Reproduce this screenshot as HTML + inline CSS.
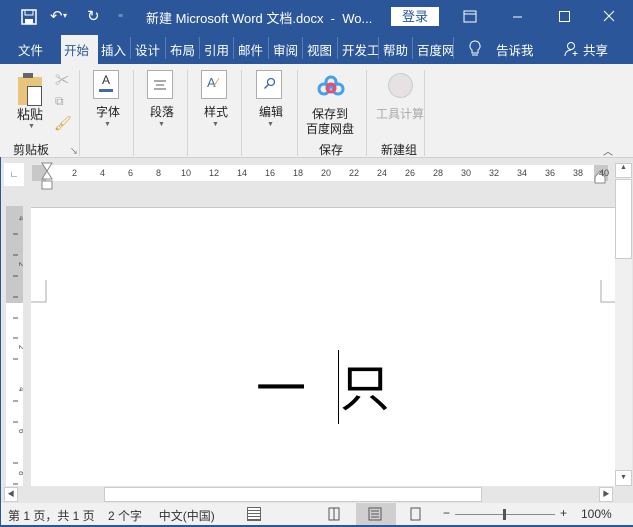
<!DOCTYPE html><html><head><meta charset="utf-8"><style>
*{margin:0;padding:0;box-sizing:border-box}
body{width:633px;height:527px;overflow:hidden;font-family:"Liberation Sans","Noto Sans CJK SC",sans-serif;background:#2b579a;position:relative;font-size:12px}
.a{position:absolute}
.t{color:#fff;font-size:13px}
.tab{position:absolute;top:40px;color:#fff;font-size:12.5px}
.sep{position:absolute;top:37px;width:1px;height:22px;background:#5a7cb3}
.rb{position:absolute;left:0;top:64px;width:633px;height:93px;background:#f1f1f1}
.box{position:absolute;top:70px;width:26px;height:29px;border:1px solid #adadad;background:#fff}
.lbl{position:absolute;font-size:12px;color:#222}
.vs{position:absolute;top:70px;width:1px;height:86px;background:#d5d5d5}
.dn{position:absolute;font-size:7px;color:#666}
.rn{position:absolute;top:168px;font-size:9px;color:#444}
</style></head><body>
<svg class="a" style="left:21px;top:9px" width="16" height="16"><rect x="1" y="1" width="14" height="14" fill="none" stroke="#fff" stroke-width="1.5"/><rect x="4" y="1" width="8" height="5" fill="none" stroke="#fff"/><rect x="4" y="10" width="8" height="5" fill="#fff"/></svg>
<div class="a t" style="left:50px;top:7px;font-size:15px">↶</div><div class="a t" style="left:63px;top:11px;font-size:8px">▾</div>
<div class="a t" style="left:87px;top:7px;font-size:15px">↻</div>
<div class="a t" style="left:118px;top:9px;font-size:10px">₌</div>
<div class="a t" style="left:146px;top:8px">新建 Microsoft Word 文档.docx &nbsp;- &nbsp;Wo...</div>
<div class="a" style="left:391px;top:7px;width:48px;height:19px;background:#fff;color:#2b579a;text-align:center;font-size:13px;line-height:19px">登录</div>
<svg class="a" style="left:460px;top:8px" width="160" height="18"><rect x="4" y="3" width="12" height="11" fill="none" stroke="#fff"/><line x1="4" y1="6" x2="16" y2="6" stroke="#fff"/><line x1="53" y1="9" x2="62" y2="9" stroke="#fff"/><rect x="99.5" y="3.5" width="10" height="10" fill="none" stroke="#fff"/><path d="M144 3l10 10M154 3l-10 10" stroke="#fff"/></svg>
<div class="tab" style="left:18px">文件</div>
<div class="a" style="left:61px;top:35px;width:37px;height:30px;background:#f1f1f1"></div>
<div class="tab" style="left:64px;color:#2b579a">开始</div>
<div class="tab" style="left:101px">插入</div><div class="sep" style="left:130px"></div>
<div class="tab" style="left:135px">设计</div><div class="sep" style="left:165px"></div>
<div class="tab" style="left:170px">布局</div><div class="sep" style="left:199px"></div>
<div class="tab" style="left:204px">引用</div><div class="sep" style="left:233px"></div>
<div class="tab" style="left:238px">邮件</div><div class="sep" style="left:268px"></div>
<div class="tab" style="left:273px">审阅</div><div class="sep" style="left:302px"></div>
<div class="tab" style="left:307px">视图</div><div class="sep" style="left:337px"></div>
<div class="tab" style="left:342px">开发工</div><div class="sep" style="left:378px"></div>
<div class="tab" style="left:383px">帮助</div><div class="sep" style="left:412px"></div>
<div class="tab" style="left:417px">百度网</div><div class="sep" style="left:453px"></div>
<svg class="a" style="left:469px;top:40px" width="12" height="18"><path d="M6 1a5 5 0 0 0-3 9v3h6v-3a5 5 0 0 0-3-9zM3 15h6" fill="none" stroke="#fff"/></svg>
<div class="tab" style="left:496px">告诉我</div>
<svg class="a" style="left:564px;top:41px" width="16" height="16"><circle cx="7" cy="5" r="3.5" fill="none" stroke="#fff"/><path d="M1 15c0-4 3-6 6-6M11 10v5M8.5 12.5h5" fill="none" stroke="#fff"/></svg>
<div class="tab" style="left:583px">共享</div>
<div class="rb"></div>
<div class="a" style="left:18px;top:77px;width:24px;height:28px;background:#e8c47c"></div>
<div class="a" style="left:27px;top:86px;width:15px;height:20px;background:#fff;border:1px solid #555"></div>
<div class="a" style="left:23px;top:73px;width:10px;height:5px;background:#666"></div>
<div class="lbl" style="left:17px;top:104px;font-size:13px">粘贴</div>
<div class="dn" style="left:28px;top:123px">▼</div>
<div class="a" style="left:55px;top:70px;color:#aaa;font-size:14px">✂</div>
<div class="a" style="left:55px;top:94px;color:#aaa;font-size:12px">⧉</div>
<div class="a" style="left:54px;top:115px;color:#d9a23a;font-size:14px">🖌︎</div>
<div class="lbl" style="left:13px;top:141px">剪贴板</div>
<div class="a" style="left:70px;top:146px;font-size:8px;color:#666">↘</div>
<div class="vs" style="left:79px"></div>
<div class="box" style="left:93px"><div style="text-align:center;font-size:12px;color:#333;line-height:18px">A</div><div style="margin:0 5px;height:3px;background:#3f6ba8"></div></div>
<div class="lbl" style="left:96px;top:103px">字体</div><div class="dn" style="left:104px;top:121px">▼</div>
<div class="vs" style="left:133px"></div>
<div class="box" style="left:147px"><svg width="24" height="27"><path d="M6 10h12M8 14h8M6 18h12" stroke="#555"/></svg></div>
<div class="lbl" style="left:150px;top:103px">段落</div><div class="dn" style="left:158px;top:121px">▼</div>
<div class="vs" style="left:187px"></div>
<div class="box" style="left:201px"><div style="font-size:13px;color:#3f6ba8;padding:4px 0 0 5px">A<span style="color:#d9a23a">⁄</span></div></div>
<div class="lbl" style="left:204px;top:103px">样式</div><div class="dn" style="left:212px;top:121px">▼</div>
<div class="vs" style="left:241px"></div>
<div class="box" style="left:256px"><svg width="24" height="27"><circle cx="14" cy="11" r="3.5" fill="none" stroke="#3f6ba8" stroke-width="1.3"/><path d="M11.5 13.5l-4 4" stroke="#3f6ba8" stroke-width="1.5"/></svg></div>
<div class="lbl" style="left:259px;top:103px">编辑</div><div class="dn" style="left:267px;top:121px">▼</div>
<div class="vs" style="left:297px"></div>
<svg class="a" style="left:316px;top:74px" width="30" height="24"><circle cx="15" cy="8" r="5" fill="none" stroke="#3fa2f0" stroke-width="3"/><circle cx="8" cy="15" r="5" fill="none" stroke="#3fa2f0" stroke-width="3"/><circle cx="22" cy="15" r="5" fill="none" stroke="#3fa2f0" stroke-width="3"/><circle cx="15" cy="14" r="4" fill="none" stroke="#f04a6a" stroke-width="3"/></svg>
<div class="lbl" style="left:312px;top:105px">保存到</div>
<div class="lbl" style="left:306px;top:120px">百度网盘</div>
<div class="lbl" style="left:319px;top:141px">保存</div>
<div class="vs" style="left:366px"></div>
<div class="a" style="left:388px;top:73px;width:25px;height:25px;border-radius:50%;background:#e6e2e4;border:1px solid #ccc"></div>
<div class="lbl" style="left:376px;top:105px;color:#aaa">工具计算</div>
<div class="lbl" style="left:381px;top:141px">新建组</div>
<div class="vs" style="left:424px"></div>
<div class="a" style="left:603px;top:143px;font-size:10px;color:#555">︿</div>
<div class="a" style="left:1px;top:157px;width:632px;height:346px;background:#e6e6e6;border-top:1px solid #d0d0d0"></div>
<div class="a" style="left:4px;top:163px;width:20px;height:23px;background:#fff;font-size:9px;color:#555;text-align:center;line-height:23px">∟</div>
<div class="a" style="left:32px;top:165px;width:570px;height:16px;background:#fff"></div>
<div class="a" style="left:32px;top:165px;width:14px;height:16px;background:#c8c8c8"></div>
<div class="a" style="left:594px;top:165px;width:14px;height:16px;background:#c8c8c8"></div>
<svg class="a" style="left:41px;top:162px" width="14" height="28"><path d="M1 1h10l-5 8l5 8H1l5-8z" fill="#fff" stroke="#888"/><rect x="1" y="19" width="10" height="8" fill="#fff" stroke="#888"/></svg>
<svg class="a" style="left:594px;top:170px" width="14" height="14"><path d="M1 13V7l5-6 5 6v6z" fill="#fff" stroke="#888"/></svg>
<div class="rn" style="left:72px">2</div><div class="rn" style="left:100px">4</div><div class="rn" style="left:128px">6</div><div class="rn" style="left:156px">8</div>
<div class="rn" style="left:181px">10</div><div class="rn" style="left:209px">12</div><div class="rn" style="left:237px">14</div><div class="rn" style="left:265px">16</div><div class="rn" style="left:293px">18</div><div class="rn" style="left:321px">20</div><div class="rn" style="left:349px">22</div><div class="rn" style="left:377px">24</div><div class="rn" style="left:405px">26</div><div class="rn" style="left:433px">28</div><div class="rn" style="left:461px">30</div><div class="rn" style="left:489px">32</div><div class="rn" style="left:517px">34</div><div class="rn" style="left:545px">36</div><div class="rn" style="left:573px">38</div><div class="rn" style="left:599px">40</div>
<div class="a" style="left:6px;top:206px;width:17px;height:280px;background:#fff"></div>
<div class="a" style="left:6px;top:206px;width:17px;height:97px;background:#c8c8c8"></div>
<svg class="a" style="left:6px;top:206px" width="17" height="280"><g stroke="#555"><path d="M7 28h5M7 49h5M7 70h5M7 91h5M7 112h5M7 132h5M7 153h5M7 195h5M7 216h5M7 257h5M7 278h5"/></g><g font-size="8" fill="#555" font-family="Liberation Sans"><text x="13" y="14" transform="rotate(90 13 14) translate(-4 0)">4</text><text x="13" y="60" transform="rotate(90 13 60) translate(-4 0)">2</text><text x="13" y="143" transform="rotate(90 13 143) translate(-4 0)">2</text><text x="13" y="185" transform="rotate(90 13 185) translate(-4 0)">4</text><text x="13" y="227" transform="rotate(90 13 227) translate(-4 0)">6</text><text x="13" y="269" transform="rotate(90 13 269) translate(-4 0)">8</text></g></svg>
<div class="a" style="left:31px;top:207px;width:584px;height:279px;background:#fff;border-top:1px solid #c8c8c8"></div>
<svg class="a" style="left:31px;top:280px" width="584" height="24"><path d="M15 0v22H0M570 0v22h14" fill="none" stroke="#aaa"/></svg>
<div class="a" style="left:256px;top:355px;font-size:50px;color:#000;font-family:'Noto Sans CJK SC',sans-serif;line-height:60px">一</div>
<div class="a" style="left:338px;top:350px;width:1px;height:74px;background:#000"></div>
<div class="a" style="left:340px;top:355px;font-size:50px;color:#000;font-family:'Noto Sans CJK SC',sans-serif;line-height:60px">只</div>
<div class="a" style="left:615px;top:163px;width:17px;height:323px;background:#f0f0f0"></div>
<div class="a" style="left:615px;top:163px;width:17px;height:15px;background:#fff;border:1px solid #ccc;font-size:7px;text-align:center;color:#555">▲</div>
<div class="a" style="left:615px;top:179px;width:17px;height:80px;background:#fff;border:1px solid #ccc"></div>
<div class="a" style="left:615px;top:470px;width:17px;height:16px;background:#fff;border:1px solid #ccc;font-size:7px;text-align:center;color:#555;line-height:14px">▼</div>
<div class="a" style="left:1px;top:486px;width:632px;height:17px;background:#e6e6e6"></div>
<div class="a" style="left:4px;top:487px;width:14px;height:15px;background:#fff;border:1px solid #ccc;font-size:7px;color:#555;line-height:13px;text-align:center">◀</div>
<div class="a" style="left:104px;top:487px;width:378px;height:15px;background:#fff;border:1px solid #ccc"></div>
<div class="a" style="left:599px;top:487px;width:14px;height:15px;background:#fff;border:1px solid #ccc;font-size:7px;color:#555;line-height:13px;text-align:center">▶</div>
<div class="a" style="left:1px;top:503px;width:632px;height:22px;background:#f1f1f1"></div>
<div class="a" style="left:8px;top:507px;font-size:12px;color:#333">第 1 页，共 1 页 &nbsp;&nbsp;&nbsp;2 个字 &nbsp;&nbsp;&nbsp;&nbsp;中文(中国)</div>
<div class="a" style="left:247px;top:507px;width:14px;height:14px;border:1px solid #666;background:repeating-linear-gradient(#fff 0 2px,#666 2px 3px)"></div>
<div class="a" style="left:356px;top:503px;width:40px;height:22px;background:#cfcfcf"></div>
<svg class="a" style="left:326px;top:506px" width="100" height="16"><path d="M3 2h10v12H3zM8 2v12" fill="none" stroke="#555"/><rect x="43" y="2" width="12" height="12" fill="none" stroke="#555"/><path d="M45 5h8M45 8h8M45 11h8" stroke="#555"/><path d="M85 2h9v12h-9z" fill="none" stroke="#555"/></svg>
<div class="a" style="left:443px;top:506px;font-size:12px;color:#333">−</div>
<div class="a" style="left:455px;top:514px;width:100px;height:1px;background:#888"></div>
<div class="a" style="left:503px;top:509px;width:3px;height:11px;background:#555"></div>
<div class="a" style="left:560px;top:506px;font-size:12px;color:#333">+</div>
<div class="a" style="left:581px;top:507px;font-size:12px;color:#333">100%</div>
<div class="a" style="left:0;top:525px;width:633px;height:2px;background:#2b579a"></div>
</body></html>
